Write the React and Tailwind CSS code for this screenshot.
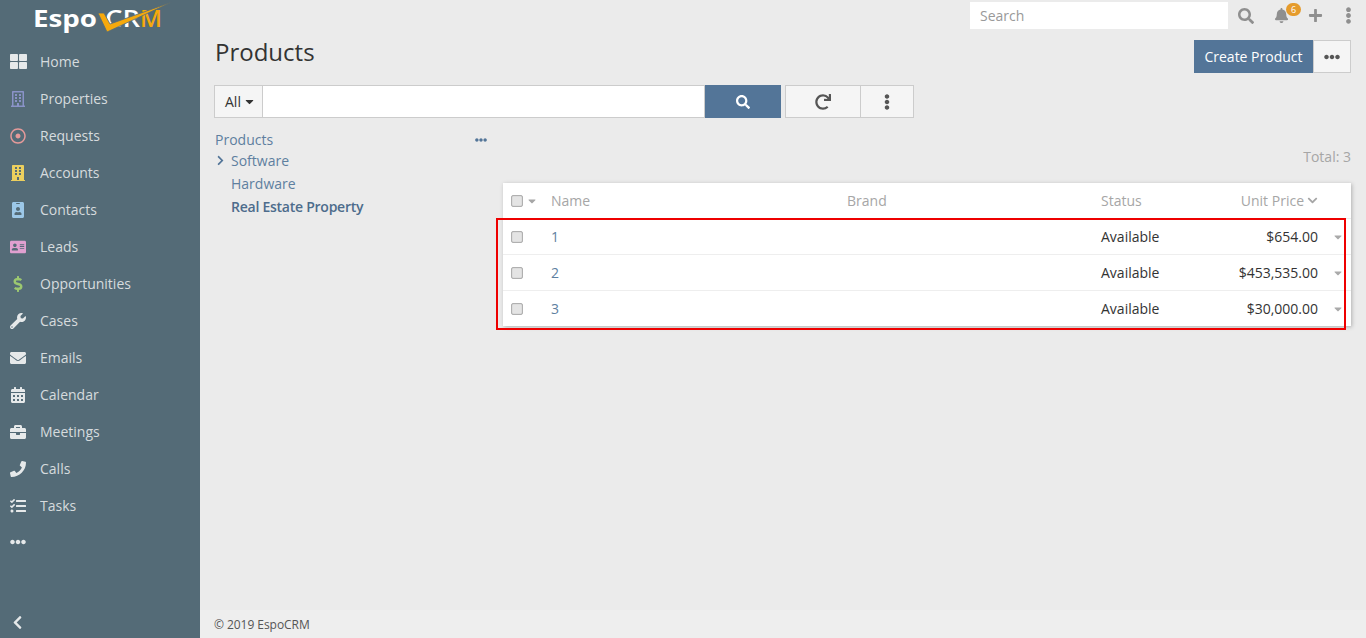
import React from "react";
import {
  FaThLarge, FaBuilding, FaRegBuilding, FaRegDotCircle, FaIdBadge, FaAddressCard, FaDollarSign, FaWrench, FaEnvelope,
  FaCalendarAlt, FaBriefcase, FaPhone, FaTasks, FaEllipsisH, FaChevronLeft, FaChevronRight, FaChevronDown, FaBell, FaPlus, FaEllipsisV, FaSearch, FaRedo, FaCaretDown,
} from "react-icons/fa";

const nav = [
  ["Home", FaThLarge, "text-[#e6e9ea]", 17],
  ["Properties", FaRegBuilding, "text-[#8a93c8]", 16],
  ["Requests", FaRegDotCircle, "text-[#e59a9a]", 16],
  ["Accounts", FaBuilding, "text-[#eccf5e]", 16],
  ["Contacts", FaIdBadge, "text-[#9cc8e8]", 16],
  ["Leads", FaAddressCard, "text-[#e0a0d0]", 16],
  ["Opportunities", FaDollarSign, "text-[#9cc870]", 16],
  ["Cases", FaWrench, "text-[#e6e9ea]", 16],
  ["Emails", FaEnvelope, "text-[#e6e9ea]", 16],
  ["Calendar", FaCalendarAlt, "text-[#e6e9ea]", 16],
  ["Meetings", FaBriefcase, "text-[#e6e9ea]", 16],
  ["Calls", FaPhone, "text-[#e6e9ea]", 16],
  ["Tasks", FaTasks, "text-[#e6e9ea]", 16],
];

const rows = [["1", "$654.00"], ["2", "$453,535.00"], ["3", "$30,000.00"]];

function Check() {
  return <span className="block w-3 h-3 rounded-[2px] border border-[#b0b0b0] bg-[#e4e4e4] shadow-[inset_0_0_1px_#999]" />;
}

function Logo() {
  return (
    <svg width="150" height="36" viewBox="0 0 150 36" className="ml-[30px] block">
      <text x="3" y="27" fontFamily="Open Sans" fontWeight="700" fontSize="24" fill="#fff" textLength="64" lengthAdjust="spacingAndGlyphs">Espo</text>
      <text x="75" y="27" fontFamily="Open Sans" fontWeight="600" fontSize="23" fill="#fff" textLength="35" lengthAdjust="spacingAndGlyphs">CR</text>
      <text x="110" y="27" fontFamily="Open Sans" fontWeight="600" fontSize="23" fill="#f6a90c" textLength="22" lengthAdjust="spacingAndGlyphs">M</text>
      <path d="M68 13 L74 13 L80 24 L142 2 L77 32 Z" fill="#f6a90c" stroke="#546b77" strokeWidth="0.8" />
    </svg>
  );
}

export default function App() {
  return (
    <div className="flex h-[638px] w-[1366px] overflow-hidden bg-[#ebebeb] text-[14px] text-[#333] font-['Open_Sans',sans-serif]">
      <aside className="flex h-full w-[200px] shrink-0 flex-col bg-[#546b77] text-[#d6dbde]">
        <div className="h-[43px]"><Logo /></div>
        <nav className="flex flex-col">
          {nav.map(([label, Icon, color, size]) => (
            <div key={label} className="flex h-[37px] items-center">
              <span className={`flex w-[40px] justify-center pr-[4px] ${color}`}><Icon size={size} /></span>
              <span>{label}</span>
            </div>
          ))}
          <div className="flex h-[35px] items-center pl-[10px] text-[#e6e9ea]"><FaEllipsisH size={16} /></div>
        </nav>
        <div className="mt-auto flex h-[32px] items-center pl-[10px] text-[#e6e9ea]"><FaChevronLeft size={15} /></div>
      </aside>

      <main className="relative flex min-w-0 flex-1 flex-col">
        <header className="flex h-[31px] items-start justify-end pt-[2px] text-[#8f8f8f]">
          <div className="flex h-[27px] w-[258px] items-center bg-white pl-[10px] text-[#999]">Search</div>
          <div className="relative flex h-[27px] w-[138px] items-center">
            <span className="ml-[10px]"><FaSearch size={16} /></span>
            <span className="ml-[20px]"><FaBell size={15} /></span>
            <span className="absolute left-[58px] top-[1px] flex h-[13px] w-[15px] items-center justify-center rounded-full bg-[#e59b2c] text-[9px] text-white">6</span>
            <span className="ml-[19px]"><FaPlus size={15} /></span>
            <span className="ml-[17px]"><FaEllipsisV size={17} /></span>
          </div>
        </header>

        <div className="flex flex-1 flex-col px-[15px]">
          <div className="flex h-[54px] items-start justify-between">
            <h1 className="mt-[4px] text-[24px] leading-[33px] font-normal text-[#333]">Products</h1>
            <div className="mt-[9px] flex h-[33px]">
              <span className="flex w-[119px] items-center justify-center bg-[#537598] text-white">Create Product</span>
              <span className="flex w-[38px] items-center justify-center border border-[#ccc] bg-[#f5f5f5] text-[#555]"><FaEllipsisH size={16} /></span>
            </div>
          </div>

          <div className="flex h-[33px] -ml-[1px]">
            <span className="flex w-[49px] items-center gap-[2px] border border-[#ccc] bg-[#f5f5f5] pl-[10px]">All <FaCaretDown size={13} /></span>
            <span className="w-[442px] border-y border-r border-[#ccc] bg-white" />
            <span className="flex w-[76px] items-center justify-center bg-[#537598] text-white"><FaSearch size={14} /></span>
            <span className="ml-[4px] flex w-[76px] items-center justify-center border border-[#ccc] bg-[#f5f5f5] text-[#555]"><FaRedo size={16} /></span>
            <span className="flex w-[53px] items-center justify-center border-y border-r border-[#ccc] bg-[#f5f5f5] text-[#555]"><FaEllipsisV size={16} /></span>
          </div>

          <div className="flex">
            <div className="w-[288px] shrink-0 pt-[12px] text-[#5e7f9f]">
              <div className="flex h-[19px] items-center justify-between pr-[16px]">
                <span>Products</span>
                <span className="text-[#537598]"><FaEllipsisH size={12} /></span>
              </div>
              <div className="relative flex h-[23px] items-center pl-[16px]">
                <span className="absolute left-0 text-[#537598]"><FaChevronRight size={11} /></span>
                Software
              </div>
              <div className="flex h-[23px] items-center pl-[16px]">Hardware</div>
              <div className="flex h-[23px] items-center pl-[16px] font-semibold tracking-[-0.25px] text-[#4d6c8c]">Real Estate Property</div>
            </div>

            <div className="min-w-0 flex-1">
              <div className="flex h-[65px] items-start justify-end pt-[29px] leading-[20px] text-[#a6a6a6]">Total: 3</div>
              <div className="bg-white shadow-[1px_1px_4px_rgba(0,0,0,0.25)]">
                <div className="grid h-[36px] grid-cols-[48px_296px_254px_100px_117px_33px] items-center border-b border-[#eee] text-[#a6a6a6]">
                  <div className="flex items-center gap-[3px] pl-[8px]"><Check /><FaCaretDown size={12} /></div>
                  <div>Name</div>
                  <div>Brand</div>
                  <div>Status</div>
                  <div className="flex items-center justify-end gap-[3px]">Unit Price <FaChevronDown size={11} /></div>
                  <div />
                </div>
                {rows.map(([n, p], i) => (
                  <div key={n} className={`grid grid-cols-[48px_296px_254px_100px_117px_33px] items-center ${i < 2 ? "h-[36px] border-b border-[#eee]" : "h-[35px]"}`}>
                    <div className="pl-[8px]"><Check /></div>
                    <div className="text-[#5e7f9f]">{n}</div>
                    <div />
                    <div>Available</div>
                    <div className="text-right">{p}</div>
                    <div className="flex justify-end pr-[7px] text-[#aaa]"><FaCaretDown size={12} /></div>
                  </div>
                ))}
              </div>
            </div>
          </div>
        </div>

        <footer className="flex h-[28px] items-center bg-[#eeeeee] pl-[14px] pt-[2px] text-[12px] tracking-[-0.05px] text-[#555]">© 2019 EspoCRM</footer>

        <div className="absolute left-[296px] top-[218px] h-[112px] w-[850px] border-2 border-[#ee0000]" />
      </main>
    </div>
  );
}
